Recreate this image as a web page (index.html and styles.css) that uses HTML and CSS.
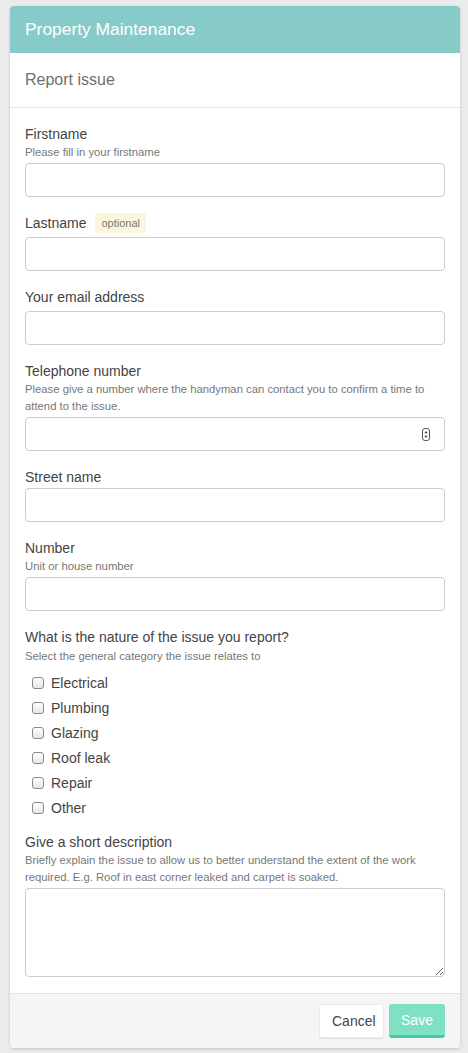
FILE: index.html
```html
<!DOCTYPE html>
<html>
<head>
<meta charset="utf-8">
<title>Property Maintenance</title>
<link rel="stylesheet" href="styles.css">
</head>
<body>
<div class="card">
  <div class="card-header">Property Maintenance</div>
  <div class="card-title">Report issue</div>
  <form class="card-body">
    <div class="group">
      <div class="label">Firstname</div>
      <div class="help">Please fill in your firstname</div>
      <input class="control" type="text">
    </div>
    <div class="group">
      <div class="label">Lastname <span class="badge">optional</span></div>
      <input class="control" type="text">
    </div>
    <div class="group">
      <div class="label">Your email address</div>
      <input class="control" type="email">
    </div>
    <div class="group">
      <div class="label">Telephone number</div>
      <div class="help">Please give a number where the handyman can contact you to confirm a time to attend to the issue.</div>
      <div class="spin-wrap">
        <input class="control" type="text">
        <svg class="spinner" width="8" height="13" viewBox="0 0 8 13">
          <rect x="0.5" y="0.5" width="7" height="12" rx="2.5" fill="#fff" stroke="#555"/>
          <path d="M4 3 L5.6 5.2 L2.4 5.2 Z" fill="#333"/>
          <path d="M4 10 L5.6 7.8 L2.4 7.8 Z" fill="#333"/>
        </svg>
      </div>
    </div>
    <div class="group">
      <div class="label label-tight">Street name</div>
      <input class="control" type="text">
    </div>
    <div class="group">
      <div class="label">Number</div>
      <div class="help">Unit or house number</div>
      <input class="control" type="text">
    </div>
    <div class="group">
      <div class="label">What is the nature of the issue you report?</div>
      <div class="help help-gap">Select the general category the issue relates to</div>
      <div class="checks">
        <label class="check"><span class="box"></span>Electrical</label>
        <label class="check"><span class="box"></span>Plumbing</label>
        <label class="check"><span class="box"></span>Glazing</label>
        <label class="check"><span class="box"></span>Roof leak</label>
        <label class="check"><span class="box"></span>Repair</label>
        <label class="check"><span class="box"></span>Other</label>
      </div>
    </div>
    <div class="group">
      <div class="label">Give a short description</div>
      <div class="help">Briefly explain the issue to allow us to better understand the extent of the work required. E.g. Roof in east corner leaked and carpet is soaked.</div>
      <textarea class="control area"></textarea>
    </div>
  </form>
  <div class="card-footer">
    <button class="btn btn-cancel" type="button">Cancel</button>
    <button class="btn btn-save" type="button">Save</button>
  </div>
</div>
</body>
</html>
```

FILE: styles.css
```css
* { box-sizing: border-box; }
html, body { margin: 0; padding: 0; }
body {
  background: #ebebeb;
  font-family: "Liberation Sans", Arial, sans-serif;
  color: #444;
  padding: 6px 8px 5px 10px;
}
.card {
  width: 450px;
  background: #fff;
  border-radius: 4px;
  box-shadow: 0 1px 3px rgba(0,0,0,0.18);
  overflow: hidden;
}
.card-header {
  height: 47px;
  background: #87cbc9;
  color: #fff;
  font-size: 17.4px;
  line-height: 47px;
  padding-left: 15px;
}
.card-title {
  height: 55px;
  border-bottom: 1px solid #e6e6e6;
  font-size: 16px;
  line-height: 54px;
  color: #707070;
  padding-left: 15px;
}
.card-body {
  padding: 16px 15px 0;
  margin: 0;
}
.group { margin-bottom: 16px; }
.label {
  display: flex;
  align-items: center;
  height: 20px;
  font-size: 14px;
  color: #444;
  margin-bottom: 4px;
}
.label:has(+ .help) { margin-bottom: 0; }
.label-tight { margin-bottom: 1px; }
.badge {
  display: inline-block;
  margin-left: 9px;
  background: #fcf6dc;
  color: #777;
  font-size: 11px;
  line-height: 20px;
  height: 20px;
  padding: 0 6px;
}
.help {
  font-size: 11.3px;
  line-height: 17px;
  color: #777;
  margin-bottom: 2px;
}
.help-gap { margin-top: 1px; margin-bottom: 5px; }
.control {
  display: block;
  width: 100%;
  height: 34px;
  border: 1px solid #ccc;
  border-radius: 4px;
  background: #fff;
  font-family: inherit;
  font-size: 14px;
  padding: 6px 12px;
  margin: 0;
  outline: none;
}
.area {
  height: 89px;
  margin-top: 1px;
  resize: vertical;
}
.spin-wrap { position: relative; }
.spinner {
  position: absolute;
  right: 15px;
  top: 11px;
}
.checks {
  display: flex;
  flex-direction: column;
  padding-left: 7px;
  margin-bottom: -4px;
}
.check {
  display: flex;
  align-items: center;
  height: 25px;
  font-size: 14px;
  color: #444;
}
.box {
  width: 12px;
  height: 12px;
  border: 1px solid #8a8a8a;
  border-radius: 3px;
  background: linear-gradient(#fff, #e6e6e6);
  margin-right: 7px;
  flex: none;
}
.card-footer {
  border-top: 1px solid #e3e3e3;
  background: #f5f5f5;
  padding: 10px 15px 10px;
  display: flex;
  justify-content: flex-end;
  gap: 5px;
}
.btn {
  height: 34px;
  font-family: inherit;
  font-size: 14px;
  border-radius: 3px;
  padding: 0 12px;
  cursor: pointer;
}
.btn-cancel {
  width: 65px;
  background: #fff;
  border: 1px solid #eaeaea;
  box-shadow: 0 1px 1px rgba(0,0,0,0.08);
  color: #444;
}
.btn-save {
  width: 56px;
  background: #80e0c4;
  border: none;
  border-bottom: 3px solid #44cca3;
  color: #fff;
}
```
